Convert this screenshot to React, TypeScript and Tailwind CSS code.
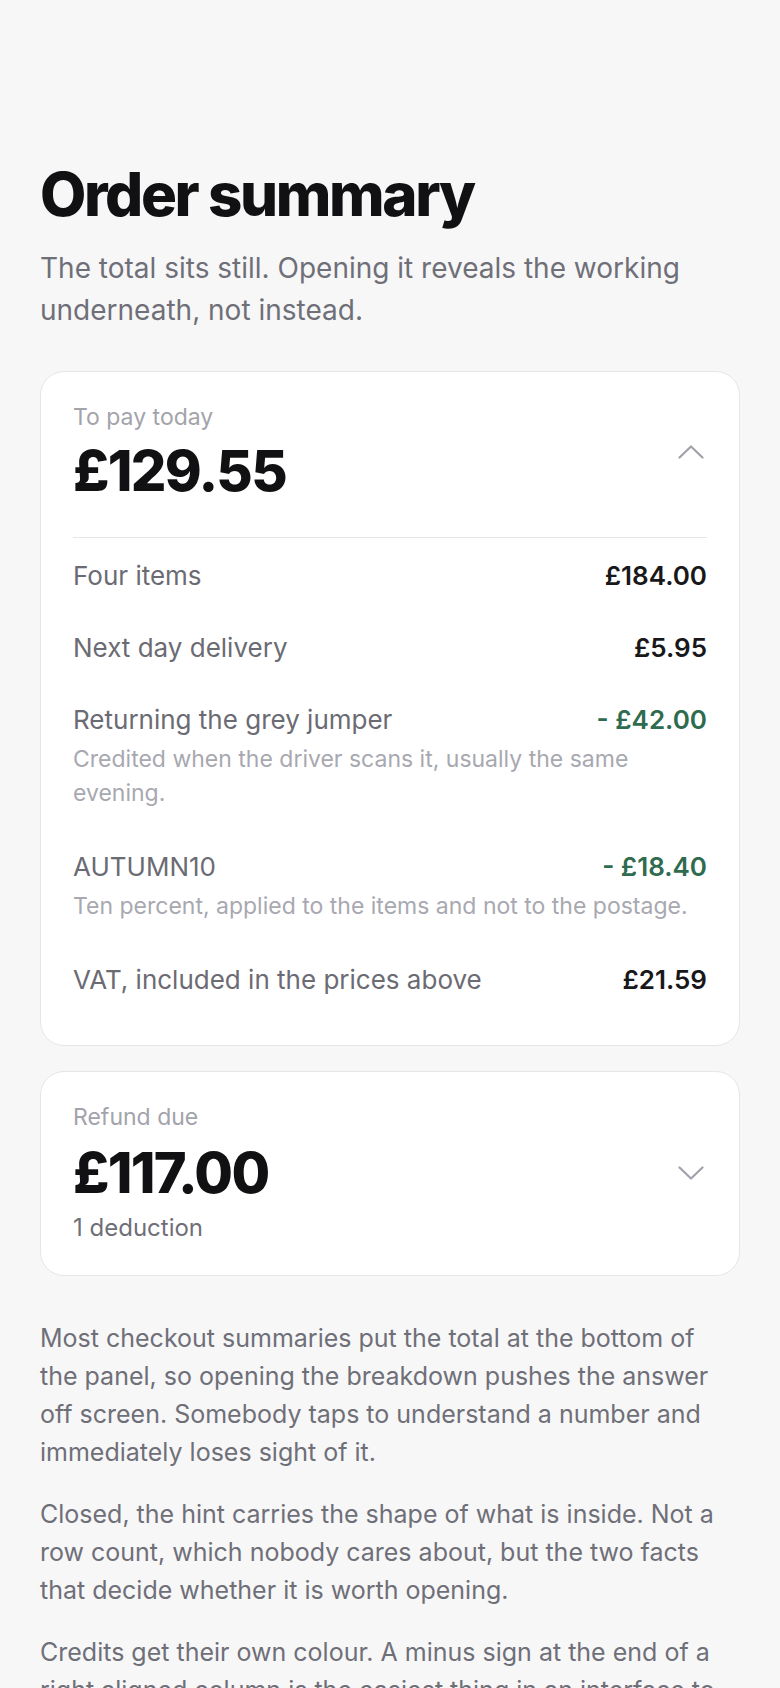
import React from "react";

function Chevron({ up }: { up: boolean }) {
  return (
    <svg
      width="26"
      height="14"
      viewBox="0 0 26 14"
      fill="none"
      stroke="#a1a1aa"
      strokeWidth="2.2"
      strokeLinecap="round"
      strokeLinejoin="round"
      className="mr-[3px] shrink-0"
    >
      {up ? <polyline points="1.5,12.5 13,1.5 24.5,12.5" /> : <polyline points="1.5,1.5 13,12.5 24.5,1.5" />}
    </svg>
  );
}

type Row = { label: string; amount: string; credit?: boolean; note?: string };

const rows: Row[] = [
  { label: "Four items", amount: "£184.00" },
  { label: "Next day delivery", amount: "£5.95" },
  {
    label: "Returning the grey jumper",
    amount: "- £42.00",
    credit: true,
    note: "Credited when the driver scans it, usually the same evening.",
  },
  {
    label: "AUTUMN10",
    amount: "- £18.40",
    credit: true,
    note: "Ten percent, applied to the items and not to the postage.",
  },
  { label: "VAT, included in the prices above", amount: "£21.59" },
];

export default function App() {
  return (
    <div className="min-h-screen bg-[#f7f7f8] font-['Inter','Noto_Sans',sans-serif] text-[#111113]">
      <main className="px-10 pt-[161px] pb-10">
        <h1 className="text-[60px] leading-[66px] font-extrabold tracking-[-0.04em] text-[#111113]">
          Order summary
        </h1>
        <p className="mt-5 max-w-[680px] text-[28px] leading-[42px] text-[#6f6f78]">
          The total sits still. Opening it reveals the working underneath, not instead.
        </p>

        <section className="mt-10 rounded-[24px] border border-[#e6e6e9] bg-white">
          <div className="flex items-center justify-between px-8 pt-8">
            <div>
              <p className="text-[23px] leading-[26px] text-[#a3a3ab]">To pay today</p>
              <p className="mt-[13px] text-[56px] leading-none font-extrabold tracking-[-0.03em] text-[#111113]">
                £129.55
              </p>
            </div>
            <Chevron up />
          </div>
          <div className="mx-8 mt-[38px] border-t border-[#e6e6e9]" />
          <div className="px-8 pt-[2px] pb-[29px]">
            {rows.map((r) => (
              <div key={r.label} className={r.note ? "pt-5 pb-[21px]" : "py-5"}>
                <div className="flex items-center justify-between gap-6">
                  <span className="text-[26px] leading-[32px] text-[#6b6b74]">{r.label}</span>
                  <span
                    className={
                      r.credit
                        ? "text-[26px] leading-[32px] font-semibold text-[#2f6b4f]"
                        : "text-[26px] leading-[32px] font-semibold text-[#18181b]"
                    }
                  >
                    {r.amount}
                  </span>
                </div>
                {r.note && (
                  <p className="mt-[6px] text-[23px] leading-[34px] text-[#a8a8b0]">{r.note}</p>
                )}
              </div>
            ))}
          </div>
        </section>

        <section className="mt-[25px] rounded-[24px] border border-[#e6e6e9] bg-white">
          <div className="flex items-center justify-between px-8 pt-8 pb-[34px]">
            <div>
              <p className="text-[23px] leading-[26px] text-[#a3a3ab]">Refund due</p>
              <p className="mt-[15px] text-[56px] leading-none font-extrabold tracking-[-0.03em] text-[#111113]">
                £117.00
              </p>
              <p className="mt-[14px] text-[24px] leading-[26px] text-[#6f6f78]">1 deduction</p>
            </div>
            <Chevron up={false} />
          </div>
        </section>

        <div className="mt-[43px] max-w-[680px] space-y-6 text-[25px] leading-[38px] text-[#6f6f78]">
          <p>
            Most checkout summaries put the total at the bottom of the panel, so opening the breakdown
            pushes the answer off screen. Somebody taps to understand a number and immediately loses
            sight of it.
          </p>
          <p>
            Closed, the hint carries the shape of what is inside. Not a row count, which nobody cares
            about, but the two facts that decide whether it is worth opening.
          </p>
          <p>
            Credits get their own colour. A minus sign at the end of a right aligned column is the
            easiest thing in an interface to miss, so the green does the work the sign cannot.
          </p>
        </div>
      </main>
    </div>
  );
}
